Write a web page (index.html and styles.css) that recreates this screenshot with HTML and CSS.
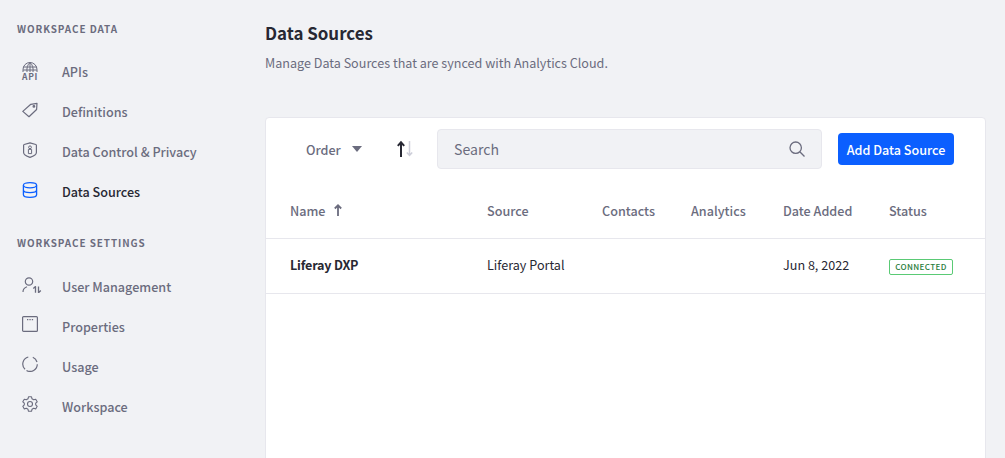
FILE: index.html
```html
<!DOCTYPE html>
<html lang="en">
<head>
<meta charset="utf-8">
<title>Data Sources</title>
<link rel="stylesheet" href="styles.css">
</head>
<body>
<div class="page">
  <aside class="sidebar">
    <h2 class="nav-title">WORKSPACE DATA</h2>
    <ul class="nav-list">
      <li class="nav-item"><svg class="icon icon-api" viewBox="0 0 16 11" fill="none" stroke="#6b6c7e" stroke-width="1"><path d="M1 10V7.500a7 7 0 0 1 14 0V10M1.200 5h13.600M1 8h14M5 10C4.500 6 5.500 2.500 8 .7c2.500 1.800 3.500 5.300 3 9.300M8 1v9"/></svg><span class="api-tag">API</span><span>APIs</span></li>
      <li class="nav-item"><svg class="icon icon-low" viewBox="0 0 16 16" fill="none" stroke="#6b6c7e" stroke-width="1.200"><path d="M.8 9.400 8.800 2.300l6.200-1-.4 6.200-7.600 7.200z" stroke-linejoin="round"/><circle cx="11.900" cy="4.400" r=".8"/></svg><span>Definitions</span></li>
      <li class="nav-item"><svg class="icon icon-low" viewBox="0 0 16 16" fill="none" stroke="#6b6c7e" stroke-width="1.200"><path d="M8 .8l5.800 1.700c.4.100.6.400.6.800v7.200c0 2-3 3.800-6.400 4.900-3.400-1.100-6.400-2.900-6.400-4.900V3.300c0-.4.200-.7.600-.8z" stroke-linejoin="round"/><circle cx="8" cy="5.300" r="1.400" stroke-width="1"/><path d="M6.400 7.400h3.200v4.200H6.400z" stroke-width="1"/></svg><span>Data Control &amp; Privacy</span></li>
      <li class="nav-item active"><svg class="icon icon-low" viewBox="0 0 16 16" fill="none" stroke="#0b5fff" stroke-width="1.300"><ellipse cx="8" cy="3.300" rx="6.600" ry="2.600"/><path d="M1.400 3.300v9.400c0 1.400 3 2.600 6.600 2.600s6.600-1.200 6.600-2.600V3.300M1.400 8c0 1.400 3 2.600 6.600 2.600s6.600-1.200 6.600-2.600"/></svg><span>Data Sources</span></li>
    </ul>
    <h2 class="nav-title second">WORKSPACE SETTINGS</h2>
    <ul class="nav-list list-two">
      <li class="nav-item"><svg class="icon icon-user" viewBox="0 0 20 16" fill="none" stroke="#6b6c7e" stroke-width="1.200"><circle cx="7" cy="4.500" r="3.700"/><path d="M1 15c0-3 1.500-4.500 4-5.300"/><path d="M13.500 15.800V9.600l-2.200 2M16.500 9.600v6.200l2.300-2.300" stroke-width="1.300" stroke-linejoin="round"/></svg><span>User Management</span></li>
      <li class="nav-item"><svg class="icon" viewBox="0 0 16 16" fill="none" stroke="#6b6c7e" stroke-width="1.200"><rect x=".6" y=".6" width="14.800" height="14.800" rx="1"/><path d="M5 3.700h1.300M7.400 3.700h1.300M9.800 3.700h1.300" stroke-width="1.300"/></svg><span>Properties</span></li>
      <li class="nav-item"><svg class="icon" viewBox="0 0 16 16" fill="none" stroke="#6b6c7e" stroke-width="1.200"><path d="M6.300 1A7.300 7.300 0 0 0 3 13.300M4.500 14.500A7.300 7.300 0 0 0 15.300 8.200M15 6A7.300 7.300 0 0 0 10.800 1.300"/></svg><span>Usage</span></li>
      <li class="nav-item"><svg class="icon" viewBox="0 0 16 16" fill="none" stroke="#6b6c7e" stroke-width="1.100"><path d="M6.500.8h3l.5 2 1.700 1 2-.6 1.500 2.600-1.500 1.400v1.700l1.500 1.400-1.500 2.600-2-.6-1.700 1-.5 2h-3l-.5-2-1.700-1-2 .6L.8 10.300l1.500-1.400V7.200L.8 5.800l1.500-2.600 2 .6 1.700-1z" stroke-linejoin="round"/><circle cx="8" cy="8" r="2.500"/></svg><span>Workspace</span></li>
    </ul>
  </aside>
  <main class="content">
    <header class="head">
      <h1 class="title">Data Sources</h1>
      <p class="subtitle">Manage Data Sources that are synced with Analytics Cloud.</p>
    </header>
    <section class="card">
      <div class="toolbar">
        <div class="order"><span>Order</span><span class="caret"></span></div>
        <svg class="sort" viewBox="0 0 18 18" fill="none" stroke-width="2"><path d="M5 17V2.500M1.800 5.800 5 2.300l3.200 3.500" stroke="#272833"/><path d="M13.500 1v14.500M10.800 12.500l2.700 3 2.700-3" stroke="#cdced9" stroke-width="1.500"/></svg>
        <div class="search"><span>Search</span><svg class="search-icon" viewBox="0 0 16 16" fill="none" stroke="#6b6c7e" stroke-width="1.300"><circle cx="6.700" cy="6.700" r="5.700"/><path d="m10.800 10.800 4.700 4.700"/></svg></div>
        <button class="add" type="button">Add Data Source</button>
      </div>
      <div class="row row-head">
        <div class="cell name-head">Name <svg class="name-arrow" viewBox="0 0 8 12" fill="none" stroke="#6b6c7e" stroke-width="1.800"><path d="M4 12V1.500M.8 4.500 4 1.300l3.200 3.200"/></svg></div>
        <div class="cell">Source</div>
        <div class="cell">Contacts</div>
        <div class="cell">Analytics</div>
        <div class="cell">Date Added</div>
        <div class="cell">Status</div>
      </div>
      <div class="row row-body">
        <div class="cell strong">Liferay DXP</div>
        <div class="cell">Liferay Portal</div>
        <div class="cell"></div>
        <div class="cell"></div>
        <div class="cell">Jun 8, 2022</div>
        <div class="cell badge-cell"><span class="badge">CONNECTED</span></div>
      </div>
    </section>
  </main>
</div>
</body>
</html>
```

FILE: styles.css
```css
* { box-sizing: border-box; }
html, body { margin: 0; height: 100%; overflow: hidden; }
body {
  background: #f1f2f5;
  font-family: "Noto Sans CJK SC", "Noto Sans", sans-serif;
  font-size: 12.6px;
  color: #272833;
}
.page { display: flex; height: 458px; overflow: hidden; }
.sidebar { width: 265px; flex: none; padding: 21px 0 0 17px; }
.nav-title {
  margin: 0;
  height: 16px;
  line-height: 16px;
  font-size: 9.900px;
  font-weight: 700;
  letter-spacing: .95px;
  color: #6b6c7e;
}
.nav-title.second { margin-top: 24px; }
.nav-list { list-style: none; margin: 14px 0 0; padding: 0; }
.nav-list.list-two { margin-top: 15px; }
.nav-item {
  position: relative;
  display: flex;
  align-items: center;
  height: 40px;
  padding-left: 45px;
  font-size: 12.6px;
  font-weight: 500;
  color: #6b6c7e;
}
.nav-item.active { color: #272833; }
.icon { position: absolute; left: 5px; top: 10px; width: 16px; height: 16px; }
.icon-api { top: 11px; height: 11px; }
.icon-low { top: 11px; }
.icon-user { top: 11px; width: 20px; }
.api-tag {
  position: absolute;
  left: 5px;
  top: 21px;
  font-size: 8.500px;
  line-height: 8px;
  font-weight: 700;
  letter-spacing: .7px;
}
.content { flex: none; width: 721px; }
.head { padding-top: 21px; height: 117px; }
.title { margin: 0; font-size: 16.9px; line-height: 24px; font-weight: 700; color: #272833; }
.subtitle { margin: 8px 0 0; font-size: 12.58px; line-height: 20px; color: #6b6c7e; }
.card {
  height: 400px;
  background: #fff;
  border: 1px solid #e7e7ed;
  border-radius: 4px 4px 0 0;
}
.toolbar { display: flex; align-items: center; height: 62px; padding: 0 31px 0 40px; }
.order { display: flex; align-items: center; font-weight: 500; color: #6b6c7e; width: 90px; }
.caret {
  margin-left: 11px;
  border-left: 5.500px solid transparent;
  border-right: 5.500px solid transparent;
  border-top: 6px solid #6b6c7e;
}
.sort { width: 18px; height: 18px; flex: none; }
.search {
  display: flex;
  align-items: center;
  justify-content: space-between;
  width: 385px;
  height: 40px;
  margin-left: 23px;
  padding: 0 16px;
  background: #f1f2f5;
  border: 1px solid #e7e7ed;
  border-radius: 4px;
  font-size: 14.100px;
  color: #6b6c7e;
}
.search-icon { width: 16px; height: 16px; }
.add {
  width: 116px;
  height: 32px;
  margin-left: 16px;
  padding: 0;
  border: 0;
  border-radius: 4px;
  background: #0b5fff;
  color: #fff;
  font: 500 12.6px "Noto Sans CJK SC", "Noto Sans", sans-serif;
}
.row { display: grid; grid-template-columns: 197px 115px 89px 92px 106px 1fr; padding-left: 24px; border-bottom: 1px solid #e7e7ed; align-items: center; }
.row-head { height: 59px; padding-top: 2px; font-weight: 500; color: #6b6c7e; }
.row-body { height: 55px; padding-bottom: 4px; }
.name-head { display: flex; align-items: center; gap: 8px; }
.name-arrow { width: 8px; height: 12px; }
.strong { font-weight: 700; letter-spacing: -.2px; }
.badge-cell { display: flex; padding-top: 6px; }
.badge {
  display: block;
  height: 16px;
  width: 64px;
  text-align: center;
  line-height: 14px;
  font-size: 8.100px;
  font-weight: 500;
  letter-spacing: .35px;
  color: #287d3c;
  border: 1px solid #5aca75;
  border-radius: 2px;
}
```
